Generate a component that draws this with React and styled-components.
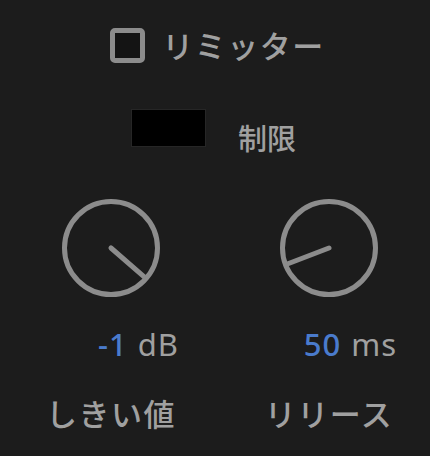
import styled, { createGlobalStyle } from "styled-components";

const GlobalStyle = createGlobalStyle`
  html, body {
    margin: 0;
    padding: 0;
    background: #1c1c1c;
  }
  body {
    font-family: "Noto Sans CJK JP", "Noto Sans", sans-serif;
    color: #a2a2a2;
  }
`;

const Panel = styled.div`
  width: 430px;
  height: 456px;
  display: flex;
  flex-direction: column;
  align-items: center;
  padding-top: 27px;
  box-sizing: border-box;
  overflow: hidden;
`;

const Header = styled.label`
  display: flex;
  align-items: center;
  gap: 17px;
  margin-left: 5px;
`;

const CheckBox = styled.span`
  width: 35px;
  height: 35px;
  box-sizing: border-box;
  border: 5px solid #8c8c8c;
  border-radius: 5px;
  background: #141414;
`;

const Title = styled.span`
  font-size: 31px;
  font-weight: 500;
  line-height: 36px;
  letter-spacing: 1.5px;
  color: #a0a0a0;
`;

const LimitRow = styled.div`
  display: flex;
  align-items: flex-start;
  gap: 33px;
  margin-top: 47px;
  margin-left: -2px;
`;

const Swatch = styled.div`
  width: 73px;
  height: 36px;
  background: #000;
  box-shadow: 0 0 0 1px #262626;
`;

const LimitLabel = styled.span`
  font-size: 29px;
  font-weight: 500;
  line-height: 30px;
  margin-top: 12px;
  color: #a0a0a0;
`;

const Knobs = styled.div`
  display: grid;
  grid-template-columns: 200px 200px;
  column-gap: 18px;
  align-self: flex-start;
  padding-left: 11px;
  margin-top: 44px;
`;

const Column = styled.div`
  display: flex;
  flex-direction: column;
  align-items: center;
`;

const Value = styled.div`
  width: 136px;
  text-align: right;
  margin-top: 28px;
  font-family: "Noto Sans", sans-serif;
  font-size: 31px;
  line-height: 32px;
  letter-spacing: 1px;
  color: #a0a0a0;
  white-space: nowrap;
`;

const Number = styled.span`
  color: #4a7bcc;
  font-weight: 500;
  margin-right: 10px;
`;

const Label = styled.div`
  margin-top: 36px;
  font-size: 31px;
  font-weight: 500;
  line-height: 34px;
  letter-spacing: 1.5px;
  color: #a0a0a0;
`;

function Knob({ angle }) {
  const rad = (angle * Math.PI) / 180;
  const len = 44;
  const x2 = 52 + len * Math.cos(rad);
  const y2 = 52 + len * Math.sin(rad);
  return (
    <svg width="104" height="104" viewBox="0 0 104 104">
      <circle cx="52" cy="52" r="46.5" fill="none" stroke="#8c8c8c" strokeWidth="5" />
      <line
        x1="52"
        y1="52"
        x2={x2}
        y2={y2}
        stroke="#8c8c8c"
        strokeWidth="5"
        strokeLinecap="round"
      />
    </svg>
  );
}

export default function App() {
  return (
    <>
      <GlobalStyle />
      <Panel>
        <Header>
          <CheckBox />
          <Title>リミッター</Title>
        </Header>
        <LimitRow>
          <Swatch />
          <LimitLabel>制限</LimitLabel>
        </LimitRow>
        <Knobs>
          <Column>
            <Knob angle={41} />
            <Value>
              <Number>-1</Number>dB
            </Value>
            <Label>しきい値</Label>
          </Column>
          <Column>
            <Knob angle={159} />
            <Value>
              <Number>50</Number>ms
            </Value>
            <Label>リリース</Label>
          </Column>
        </Knobs>
      </Panel>
    </>
  );
}
